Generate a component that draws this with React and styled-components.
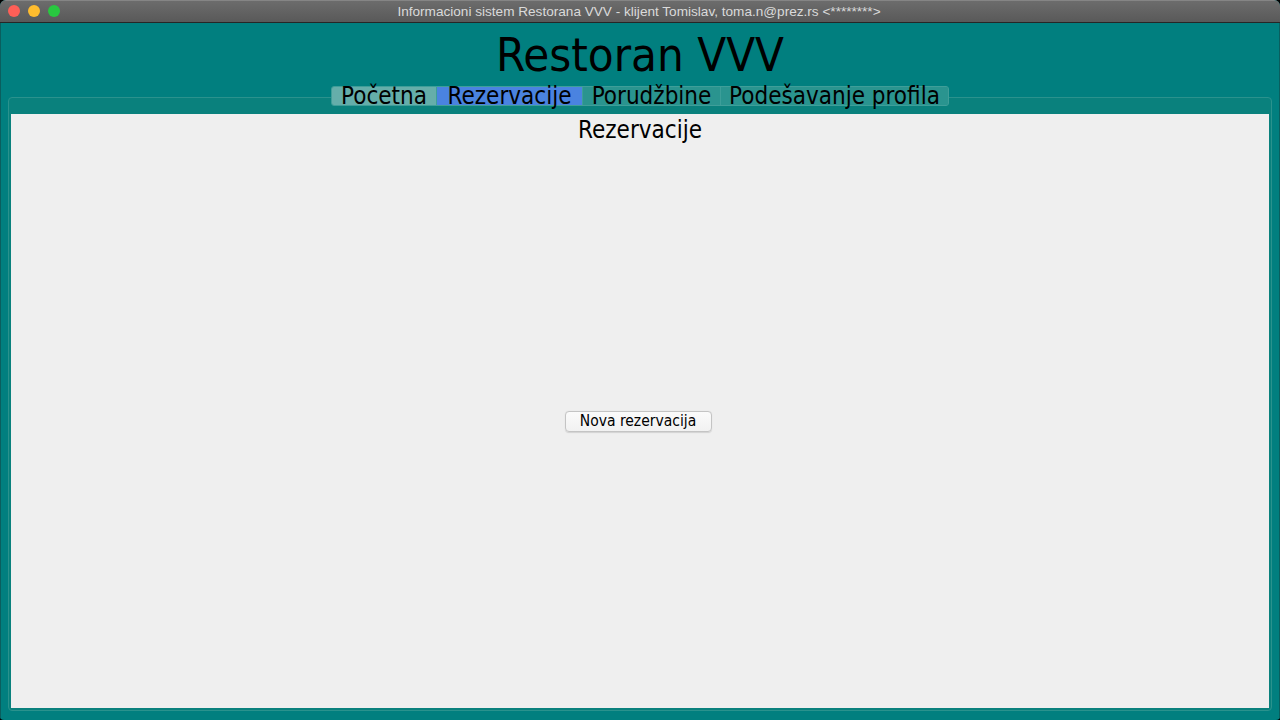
import React from "react";
import styled, { createGlobalStyle } from "styled-components";

const Global = createGlobalStyle`
  html, body { margin: 0; padding: 0; width: 1280px; height: 720px; overflow: hidden; background: #000; }
  #root { width: 1280px; height: 720px; }
  * { box-sizing: border-box; }
`;

const Window = styled.div`
  width: 1280px;
  height: 720px;
  display: flex;
  flex-direction: column;
  background: #017f7f;
  border-radius: 6px 6px 4px 4px;
  overflow: hidden;
  font-family: "DejaVu Sans Condensed", "DejaVu Sans", sans-serif;
`;

const TitleBar = styled.div`
  height: 23px;
  flex: none;
  position: relative;
  display: flex;
  align-items: center;
  justify-content: center;
  background: linear-gradient(#6c6c6c, #595959);
  border-top: 1px solid #858585;
  border-bottom: 1px solid #262626;
`;

const Lights = styled.div`
  position: absolute;
  left: 8px;
  top: 4px;
  display: flex;
  gap: 8px;
`;

const Light = styled.span`
  width: 12px;
  height: 12px;
  border-radius: 50%;
  background: ${(p) => p.$c};
`;

const TitleText = styled.div`
  font-family: "Liberation Sans", Arial, sans-serif;
  font-size: 13.6px;
  color: #dadada;
  margin-right: 2px;
`;

const Body = styled.div`
  flex: 1;
  display: flex;
  flex-direction: column;
  align-items: stretch;
  border-left: 1px solid #0a5e5e;
  border-right: 1px solid #0a5e5e;
  padding-bottom: 9px;
`;

const AppTitle = styled.h1`
  margin: 4px 0 4px;
  font-weight: normal;
  font-size: 47px;
  line-height: 55px;
  text-align: center;
  color: #000;
`;

const TabBar = styled.div`
  align-self: center;
  display: flex;
  height: 20px;
  margin-bottom: -9px;
  position: relative;
  z-index: 1;
  border: 1px solid #3f9e99;
  border-radius: 3px;
  background: #2a948f;
`;

const Tab = styled.div`
  width: ${(p) => p.$w}px;
  text-align: center;
  font-size: 24px;
  line-height: 18px;
  color: #000;
  white-space: nowrap;
  background: ${(p) => (p.$active ? "#4a83e0" : p.$first ? "#65aeaa" : "#2a948f")};
  border-left: ${(p) => (p.$first ? "none" : "1px solid #3c9e99")};
  border-radius: ${(p) => (p.$first ? "2px 0 0 2px" : p.$last ? "0 2px 2px 0" : "0")};
`;

const Pane = styled.div`
  flex: 1;
  margin: 0 7px;
  display: flex;
  flex-direction: column;
  padding: 16px 2px 2px;
  background: #0a817d;
  border: 1px solid #2a928d;
  border-radius: 4px;
`;

const Page = styled.div`
  flex: 1;
  display: flex;
  flex-direction: column;
  align-items: center;
  background: #efefef;
`;

const Heading = styled.h2`
  margin: 2px 0 0;
  font-weight: normal;
  font-size: 24px;
  line-height: 28px;
  color: #000;
`;

const Center = styled.div`
  flex: 1;
  display: flex;
  align-items: center;
  justify-content: center;
  padding-bottom: 10px;
  padding-right: 4px;
`;

const Button = styled.button`
  width: 147px;
  height: 21px;
  padding: 0;
  font-family: inherit;
  font-size: 15.5px;
  line-height: 19px;
  color: #000;
  background: linear-gradient(#fbfbfb, #f1f1f1);
  border: 1px solid #c4c4c4;
  border-radius: 4px;
  box-shadow: 0 0.5px 1px rgba(0,0,0,0.12);
`;

export default function App() {
  return (
    <>
      <Global />
      <Window>
        <TitleBar>
          <Lights>
            <Light $c="#fe5f57" />
            <Light $c="#febc2e" />
            <Light $c="#28c840" />
          </Lights>
          <TitleText>Informacioni sistem Restorana VVV - klijent Tomislav, toma.n@prez.rs &lt;********&gt;</TitleText>
        </TitleBar>
        <Body>
          <AppTitle>Restoran VVV</AppTitle>
          <TabBar>
            <Tab $first $w={104}>Početna</Tab>
            <Tab $active $w={146}>Rezervacije</Tab>
            <Tab $w={138}>Porudžbine</Tab>
            <Tab $last $w={228}>Podešavanje profila</Tab>
          </TabBar>
          <Pane>
            <Page>
              <Heading>Rezervacije</Heading>
              <Center>
                <Button>Nova rezervacija</Button>
              </Center>
            </Page>
          </Pane>
        </Body>
      </Window>
    </>
  );
}
